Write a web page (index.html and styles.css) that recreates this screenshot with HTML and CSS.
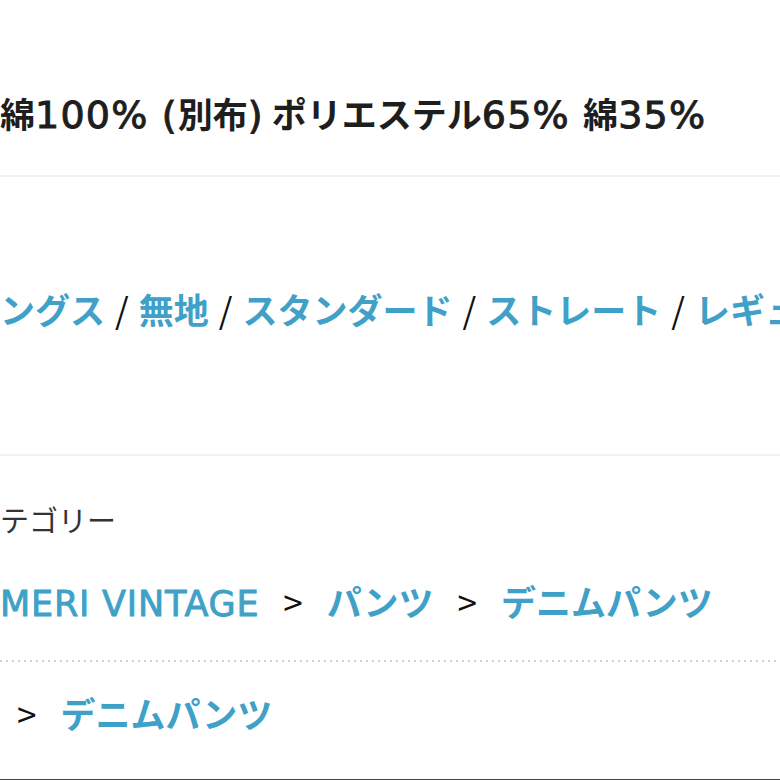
FILE: index.html
```html
<!DOCTYPE html>
<html lang="ja">
<head>
<meta charset="utf-8">
<link rel="stylesheet" href="styles.css">
</head>
<body>
<div class="page">
  <section class="sec sec-material">
    <p class="material">綿<span class="num">100% (</span>別布<span class="num">)</span> ポリエステル<span class="num">65% </span>綿<span class="num">35%</span></p>
  </section>
  <section class="sec sec-tags">
    <p class="tags"><a class="link">ングス</a><span class="slash">/</span><a class="link">無地</a><span class="slash">/</span><a class="link">スタンダード</a><span class="slash">/</span><a class="link">ストレート</a><span class="slash">/</span><a class="link">レギュラー</a></p>
  </section>
  <section class="sec sec-cat">
    <p class="cat-label">テゴリー</p>
    <p class="crumbs crumbs-first"><a class="link latin">MERI VINTAGE</a><span class="gt">&gt;</span><a class="link">パンツ</a><span class="gt">&gt;</span><a class="link">デニムパンツ</a></p>
    <div class="dots"></div>
    <p class="crumbs crumbs-second"><span class="gt gt-lead">&gt;</span><a class="link">デニムパンツ</a></p>
  </section>
</div>
</body>
</html>
```

FILE: styles.css
```css
html, body {
  margin: 0;
  padding: 0;
  background: #ffffff;
}
body {
  width: 780px;
  height: 780px;
  overflow: hidden;
  font-family: "Noto Sans CJK JP", "Noto Sans", sans-serif;
}
.page {
  width: 780px;
}
p {
  margin: 0;
  white-space: nowrap;
}
.sec-material {
  padding: 89px 0 38px 0;
  border-bottom: 2px solid #f1f1f1;
}
.material {
  font-size: 35px;
  line-height: 48px;
  font-weight: 600;
  color: #1e1e1e;
}
.num {
  font-family: "DejaVu Sans", sans-serif;
  font-size: 38px;
  line-height: 1;
  font-weight: 400;
  letter-spacing: 1.2px;
  -webkit-text-stroke: 1px #1e1e1e;
}
.sec-tags {
  padding: 108px 0 121px 0;
  border-bottom: 2px solid #f1f1f1;
}
.tags {
  font-size: 35px;
  line-height: 48px;
  font-weight: 600;
}
.link {
  color: #3fa1c8;
}
.slash {
  color: #111;
  font-weight: 400;
  margin: 0 10px;
}
.sec-cat {
  padding-top: 43px;
  border-bottom: 2px solid #444;
  height: 325px;
  box-sizing: border-box;
}
.cat-label {
  font-size: 29px;
  line-height: 40px;
  font-weight: 400;
  color: #333;
}
.crumbs {
  font-size: 35px;
  line-height: 48px;
  font-weight: 600;
}
.latin {
  font-family: "DejaVu Sans", sans-serif;
  font-weight: 400;
  letter-spacing: 0.8px;
  -webkit-text-stroke: 0.9px #3fa1c8;
}
.crumbs-first {
  margin-top: 38px;
}
.dots {
  margin-top: 32px;
  height: 2px;
  background: repeating-linear-gradient(to right, #cfcfcf 0 2px, transparent 2px 6px);
}
.crumbs-second {
  margin-top: 27px;
}
.gt {
  color: #111;
  font-weight: 400;
  margin: 0 24px;
}
.gt-lead {
  margin-left: 17px;
}
```
